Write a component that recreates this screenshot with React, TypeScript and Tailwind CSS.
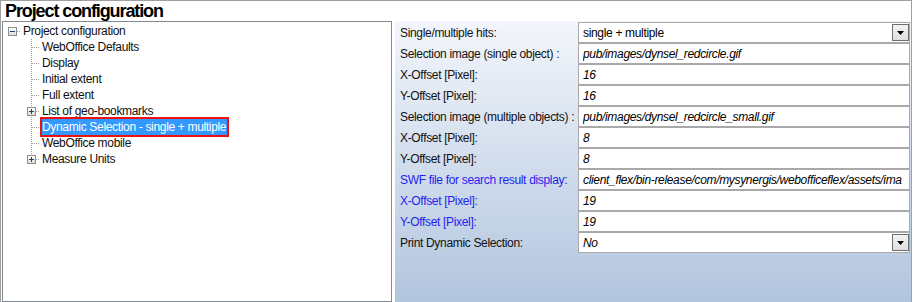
import React from "react";

type Row = {
  label: string;
  value: string;
  blue?: boolean;
  italic?: boolean;
  dropdown?: boolean;
};

const rows: Row[] = [
  { label: "Single/multiple hits:", value: "single + multiple", dropdown: true },
  { label: "Selection image (single object) :", value: "pub/images/dynsel_redcircle.gif", italic: true },
  { label: "X-Offset [Pixel]:", value: "16", italic: true },
  { label: "Y-Offset [Pixel]:", value: "16", italic: true },
  { label: "Selection image (multiple objects) :", value: "pub/images/dynsel_redcircle_small.gif", italic: true },
  { label: "X-Offset [Pixel]:", value: "8", italic: true },
  { label: "Y-Offset [Pixel]:", value: "8", italic: true },
  {
    label: "SWF file for search result display:",
    value: "client_flex/bin-release/com/mysynergis/webofficeflex/assets/ima",
    italic: true,
    blue: true,
  },
  { label: "X-Offset [Pixel]:", value: "19", italic: true, blue: true },
  { label: "Y-Offset [Pixel]:", value: "19", italic: true, blue: true },
  { label: "Print Dynamic Selection:", value: "No", italic: true, dropdown: true },
];

type Node = { label: string; expander?: boolean; selected?: boolean };

const children: Node[] = [
  { label: "WebOffice Defaults" },
  { label: "Display" },
  { label: "Initial extent" },
  { label: "Full extent" },
  { label: "List of geo-bookmarks", expander: true },
  { label: "Dynamic Selection - single + multiple", selected: true },
  { label: "WebOffice mobile" },
  { label: "Measure Units", expander: true },
];

// the little [+] / [-] box of the tree view
function ExpanderBox({ x, plus }: { x: number; plus: boolean }) {
  return (
    <g>
      <defs>
        <linearGradient id="exg" x1="0" y1="0" x2="0" y2="1">
          <stop offset="0" stopColor="#ffffff" />
          <stop offset="1" stopColor="#dcdcdc" />
        </linearGradient>
      </defs>
      <rect x={x + 0.5} y={4.5} width={8} height={8} fill="url(#exg)" stroke="#8f8f8f" />
      <line x1={x + 2} y1={8.5} x2={x + 7} y2={8.5} stroke="#1e3f78" />
      {plus && <line x1={x + 4.5} y1={6} x2={x + 4.5} y2={11} stroke="#1e3f78" />}
    </g>
  );
}

function ChildConnector({ last, expander }: { last: boolean; expander?: boolean }) {
  return (
    <svg width="17" height="16" className="shrink-0 block">
      <line
        x1={8.5}
        y1={0}
        x2={8.5}
        y2={last ? 9 : 16}
        stroke="#a0a0a0"
        strokeDasharray="1 1"
      />
      <line x1={9} y1={8.5} x2={17} y2={8.5} stroke="#a0a0a0" strokeDasharray="1 1" />
      {expander && <ExpanderBox x={4} plus />}
    </svg>
  );
}

function TreeLabel({ node }: { node: Node }) {
  return (
    <div
      className={
        "flex h-[20px] items-center border-2 " +
        (node.selected ? "border-[#ee1111]" : "border-transparent")
      }
    >
      <span
        className={
          "flex h-[16px] items-center pr-[1px] whitespace-nowrap " +
          (node.selected ? "bg-[#3399ff] text-white" : "text-[#101010]")
        }
      >
        {node.label}
      </span>
    </div>
  );
}

function DropButton() {
  return (
    <div className="flex h-[17px] w-[17px] shrink-0 items-center justify-center border border-[#6e6e6e] bg-linear-to-b from-[#f4f4f4] to-[#dedede]">
      <svg width="7" height="4" className="block">
        <polygon points="0,0 7,0 3.5,4" fill="#000" />
      </svg>
    </div>
  );
}

export default function App() {
  return (
    <div
      className="h-[302px] w-[915px] overflow-hidden bg-white text-[12px] tracking-[-0.33px]"
      style={{ fontFamily: '"Liberation Sans", Arial, sans-serif' }}
    >
      <div className="flex h-[302px] w-[912px] flex-col border-l border-r border-t border-[#a0a0a0]">
        {/* Title */}
        <div className="flex h-[20px] items-center pl-[4px] text-[18px] font-bold leading-none tracking-[-1.1px] text-black">
          Project configuration
        </div>

        <div className="flex flex-1 pl-[1px]">
          {/* Tree */}
          <div className="h-[281px] w-[390px] shrink-0 border border-[#828790] bg-white pt-[1px] leading-none">
            <div className="flex h-[16px] items-center">
              <svg width="18" height="16" className="shrink-0 block">
                <line x1={14} y1={8.5} x2={19} y2={8.5} stroke="#a0a0a0" strokeDasharray="1 1" />
                <ExpanderBox x={5} plus={false} />
              </svg>
              <TreeLabel node={{ label: "Project configuration" }} />
            </div>
            {children.map((c, i) => (
              <div key={c.label} className="flex h-[16px] items-center pl-[20px]">
                <ChildConnector last={i === children.length - 1} expander={c.expander} />
                <TreeLabel node={c} />
              </div>
            ))}
          </div>

          {/* Property grid */}
          <div className="ml-[3px] w-[516px] shrink-0 overflow-hidden bg-linear-to-b from-[#f3f6fb] to-[#b2c5de] pt-[1px]">
            {rows.map((r, i) => (
              <div key={i} className="flex h-[21px]">
                <div
                  className={
                    "flex w-[183px] shrink-0 items-center pl-[5px] whitespace-nowrap " +
                    (r.blue ? "text-[#1f1ff0]" : "text-[#111]")
                  }
                >
                  {r.label}
                </div>
                <div className="flex w-[332px] shrink-0 items-center overflow-hidden border border-[#a9a9a9] bg-white pl-[4px]">
                  <span
                    className={
                      "min-w-0 flex-1 overflow-hidden whitespace-nowrap text-black " +
                      (r.italic ? "italic" : "")
                    }
                  >
                    {r.value}
                  </span>
                  {r.dropdown && <DropButton />}
                </div>
              </div>
            ))}
          </div>
        </div>
      </div>
    </div>
  );
}
